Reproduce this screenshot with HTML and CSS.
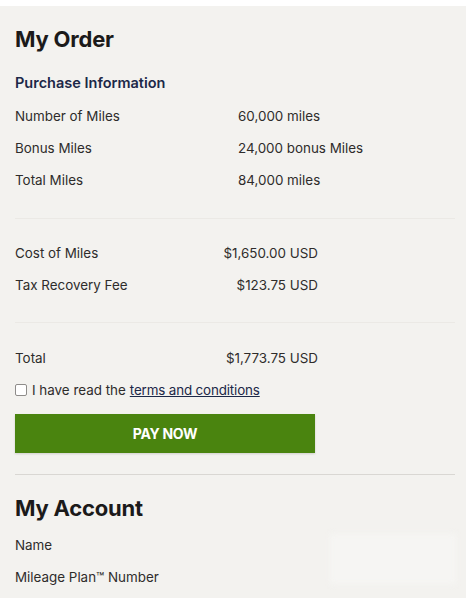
FILE: index.html
```html
<!DOCTYPE html>
<html>
<head>
<meta charset="utf-8">
<link rel="stylesheet" href="styles.css">
</head>
<body>
<div class="panel">
  <h1 class="title">My Order</h1>
  <h2 class="subtitle">Purchase Information</h2>
  <div class="rows first-rows">
    <div class="row"><span class="label">Number of Miles</span><span class="val-left">60,000 miles</span></div>
    <div class="row"><span class="label">Bonus Miles</span><span class="val-left">24,000 bonus Miles</span></div>
    <div class="row"><span class="label">Total Miles</span><span class="val-left">84,000 miles</span></div>
  </div>
  <hr class="divider light first">
  <div class="rows">
    <div class="row"><span class="label">Cost of Miles</span><span class="val-right">$1,650.00 USD</span></div>
    <div class="row"><span class="label">Tax Recovery Fee</span><span class="val-right">$123.75 USD</span></div>
  </div>
  <hr class="divider light second">
  <div class="rows">
    <div class="row"><span class="label">Total</span><span class="val-right">$1,773.75 USD</span></div>
  </div>
  <label class="terms"><span class="box"></span>I have read the <a class="link" href="#">terms and conditions</a></label>
  <button class="pay">PAY NOW</button>
  <hr class="divider strong">
  <h1 class="title account">My Account</h1>
  <div class="rows">
    <div class="row"><span class="label">Name</span></div>
    <div class="row"><span class="label">Mileage Plan™ Number</span></div>
  </div>
  <div class="blur"></div>
</div>
</body>
</html>
```
FILE: styles.css
```css
html, body {
  margin: 0;
  padding: 0;
  background: #ffffff;
}
body {
  font-family: "Inter", "Noto Sans", sans-serif;
  color: #2e2c2b;
  padding-top: 6px;
}
.panel {
  position: relative;
  background: #f3f2ef;
  height: 592px;
  padding: 0 11px 0 15px;
  overflow: hidden;
}
.title {
  margin: 0;
  padding-top: 21px;
  font-size: 22px;
  font-weight: 700;
  line-height: 24px;
  letter-spacing: -0.2px;
  color: #1b1a1a;
}
.subtitle {
  margin: 23px 0 0;
  font-size: 14.5px;
  font-weight: 600;
  line-height: 18px;
  color: #1c2848;
}
.rows {
  display: flex;
  flex-direction: column;
}
.first-rows {
  margin-top: 8px;
}
.row {
  display: flex;
  height: 32px;
  align-items: center;
  font-size: 13.4px;
}
.label {
  width: 207px;
  flex: none;
}
.val-left {
  padding-left: 16px;
}
.val-right {
  width: 96px;
  text-align: right;
}
.divider {
  border: 0;
  margin: 0;
  height: 1px;
}
.light {
  background: #ebe9e5;
}
.first {
  margin: 22px 0 18px;
}
.second {
  margin: 21px 0 19px;
}
.strong {
  background: #d9d7d3;
  margin: 21px 0 0;
}
.terms {
  display: flex;
  align-items: center;
  height: 32px;
  font-size: 13.4px;
}
.box {
  width: 10px;
  height: 10px;
  border: 1px solid #8e8c8a;
  border-radius: 2px;
  background: #fff;
  margin-right: 5px;
}
.link {
  color: #1c2848;
  text-decoration: underline;
  margin-left: 4px;
  letter-spacing: -0.15px;
}
.pay {
  display: block;
  width: 300px;
  height: 39px;
  margin-top: 8px;
  margin-bottom: 0;
  border: 0;
  background: #4a840f;
  color: #ffffff;
  font-family: inherit;
  font-size: 14px;
  font-weight: 700;
  letter-spacing: -0.3px;
  box-shadow: 0 1px 2px rgba(0,0,0,0.15);
}
.account {
  padding-top: 21px;
  margin-bottom: 9px;
}
.blur {
  position: absolute;
  left: 330px;
  top: 528px;
  width: 126px;
  height: 50px;
  background: #f6f5f3;
  filter: blur(3px);
}
```
